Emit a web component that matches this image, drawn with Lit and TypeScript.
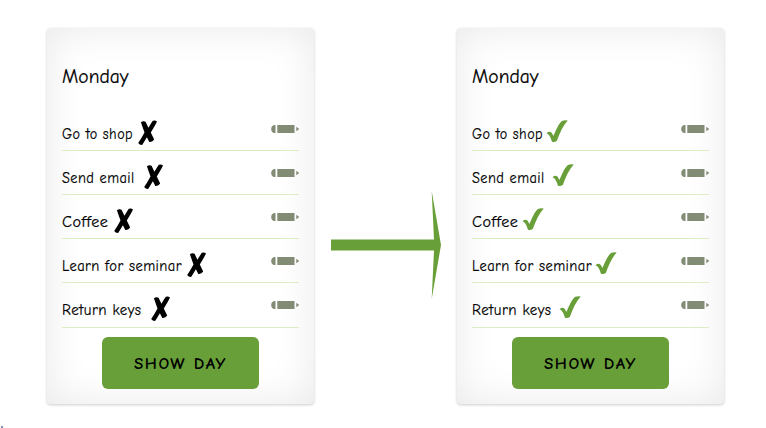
import { LitElement, html, css, svg } from 'lit';
import { customElement, property } from 'lit/decorators.js';

interface Task { name: string; width: number; crossGap: number; checkGap: number; }

const TASKS: Task[] = [
  { name: 'Go to shop', width: 71, crossGap: 5, checkGap: 3 },
  { name: 'Send email', width: 72.5, crossGap: 9.5, checkGap: 7.5 },
  { name: 'Coffee', width: 46.5, crossGap: 5.5, checkGap: 3.5 },
  { name: 'Learn for seminar', width: 120, crossGap: 5, checkGap: 3 },
  { name: 'Return keys', width: 79.5, crossGap: 9.5, checkGap: 7.5 },
];

const fitted = (text: string, width: number, height: number, baseline: number) => html`
  <svg class="fit" width=${width} height=${height}>
    ${svg`<text x="0" y=${baseline} textLength=${width} lengthAdjust="spacingAndGlyphs">${text}</text>`}
  </svg>`;

@customElement('day-card')
export class DayCard extends LitElement {
  @property({ type: Boolean }) done = false;

  static styles = css`
    :host {
      display: flex; flex-direction: column; box-sizing: border-box;
      width: 267px; height: 376px; padding: 33px 15px 15px;
      border-radius: 4px; background: #fff;
      box-shadow: 0 1px 3px rgba(0, 0, 0, .2), inset 0 0 40px rgba(0, 0, 0, .09);
      font-family: "Comic Sans MS", "Comic Neue", Lato, sans-serif; color: #000;
    }
    svg { display: block; flex: none; overflow: visible; }
    .fit text { stroke: #000; stroke-width: .2px; }
    .title { height: 46px; font-size: 21px; }
    .row {
      display: flex; box-sizing: border-box; height: 44px; width: 237px;
      border-bottom: 1px solid #dcedc1; font-size: 16px;
      letter-spacing: .5px; font-variant-ligatures: none;
    }
    .row:last-of-type { height: 45px; }
    .label { padding-top: 13px; }
    .mark { padding-top: 13px; }
    .pencil { margin-left: auto; padding-top: 18px; }
    .button {
      align-self: center; display: flex; justify-content: center; box-sizing: border-box;
      width: 157px; height: 52px; margin: 9px 0 0; padding: 17px 0 0; border: 0;
      border-radius: 6px; background: #689f38; color: #000;
      font: bold 15px "Comic Sans MS", "Comic Neue", Lato, sans-serif;
      letter-spacing: 1.4px;
    }
    .button .fit text { stroke-width: 0; }
  `;

  render() {
    return html`
      <div class="title">${fitted('Monday', 66.5, 34, 22)}</div>
      <section>
        ${TASKS.map(t => html`
          <div class="row">
            <div class="label">${fitted(t.name, t.width, 24, 19)}</div>
            <div class="mark" style="margin-left:${this.done ? t.checkGap : t.crossGap}px">
              ${this.done ? html`
                <svg width="22" height="23" viewBox="0 0 22 23">
                  <path fill="#689f38" d="M.5 13.2Q4.8 9.3 7.4 16C10.8 8.2 13.4 2.6 16.5.8Q18.5 0 21.7.5C17 5.5 13.9 12.7 10.8 20.9Q8.5 22.6 6 21.8C4.8 18 3.5 14.2.5 13.2Z"/>
                </svg>` : html`
                <svg width="19" height="25" viewBox="0 0 19 25">
                  <path fill="#000" d="M2.8 2.5Q4.8.7 7.6 1.7L10.4 7.8Q13 3.4 14.8.8 17.2-.1 19 1.5 17.1 5.6 12.8 12.5L16.2 19.6Q14.5 22.4 11.3 22L8.9 17.2Q6 22 4.3 24.8 1.4 25.4.2 23.1 3.2 18.8 6.5 12.6L4 5.5Q3.6 3.4 2.8 2.5Z"/>
                </svg>`}
            </div>
            <div class="pencil">
              <svg width="28" height="8" viewBox="0 0 28 8" fill="#828c75">
                <path d="M4.5 0V8H3Q.2 7 .2 4T3 0ZM6.3 0H23.5V8H6.3ZM25.3 1.8L28.3 4 25.3 6.2Z"/>
              </svg>
            </div>
          </div>`)}
      </section>
      <button class="button">${fitted('SHOW DAY', 93, 22, 15)}</button>
    `;
  }
}

@customElement('app-root')
export class AppRoot extends LitElement {
  static styles = css`
    :host {
      display: flex; align-items: flex-start; box-sizing: border-box; position: relative;
      width: 766px; height: 428px; padding: 28px 0 0 47px; background: #fff; overflow: hidden;
    }
    .arrow { display: block; flex: none; width: 109px; height: 108px; margin: 163px 17px 0; overflow: visible; }
    .dot { position: absolute; left: 1px; bottom: 0; width: 2px; height: 2px; background: #8192ad; }
    day-card { flex: none; }
  `;

  render() {
    return html`
      <day-card></day-card>
      <svg class="arrow" viewBox="0 0 109 108">
        <path fill="#689f38" d="M0 48.4H103L100.7 0 110 54 100.7 108 103 59.4H0Z"/>
      </svg>
      <day-card done></day-card>
      <i class="dot"></i>
    `;
  }
}
